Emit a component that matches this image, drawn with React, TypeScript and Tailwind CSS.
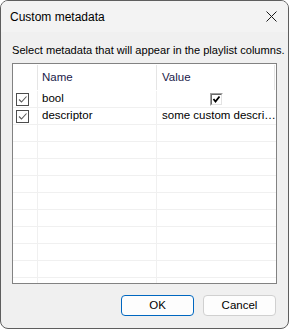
import React from 'react';

const font = { fontFamily: '"Segoe UI", "Liberation Sans", Arial, sans-serif' };

const rows = [
  { name: 'bool', value: 'check' },
  { name: 'descriptor', value: 'some custom descri…' },
];

const ListCheck: React.FC = () => (
  <div className="w-[13px] h-[13px] border border-[#4d4d4d] bg-white flex items-center justify-center">
    <svg width="11" height="11" viewBox="0 0 11 11">
      <polyline points="2,5.5 4.5,8 9.5,2.5" fill="none" stroke="#5a5a5a" strokeWidth="1.1" />
    </svg>
  </div>
);

const ClassicCheck: React.FC = () => (
  <div className="w-[13px] h-[13px] border-t border-l border-[#a0a0a0] border-r border-b border-r-white border-b-white">
    <div className="w-full h-full border-t border-l border-[#696969] border-r border-b border-r-[#e3e3e3] border-b-[#e3e3e3] bg-white flex items-center justify-center">
      <svg width="9" height="9" viewBox="0 0 9 9">
        <polyline points="1.5,4 3.5,6.5 7.5,1.5" fill="none" stroke="#000" strokeWidth="1.8" />
      </svg>
    </div>
  </div>
);

export default function App() {
  const empty = Array.from({ length: 10 });
  return (
    <div
      className="w-[289px] h-[329px] rounded-[8px] border border-[#5e5e5e] overflow-hidden bg-[#f0f0f0] flex flex-col text-[11.5px] text-black"
      style={font}
    >
      {/* Title bar */}
      <div className="h-[31px] flex items-center justify-between pl-[9px] pr-[10px] bg-[#f3f3f3]">
        <span className="leading-none text-[12px]">Custom metadata</span>
        <svg width="11" height="11" viewBox="0 0 11 11" className="mr-[1px]">
          <path d="M0.5 0.5 L10.5 10.5 M10.5 0.5 L0.5 10.5" stroke="#1a1a1a" strokeWidth="1" />
        </svg>
      </div>

      {/* Body */}
      <div className="flex-1 flex flex-col px-[11px]">
        <p className="mt-[10px] h-[16px] leading-[16px] whitespace-nowrap text-[11.1px]">
          Select metadata that will appear in the playlist columns.
        </p>

        <div className="mt-[5px] h-[221px] border border-[#828282] bg-white overflow-hidden">
          {/* Header */}
          <div className="h-[27px] flex text-[#1a1a4a]">
            <div className="w-[25px] border-r border-[#e5e5e5] my-[1px]" />
            <div className="w-[119px] border-r border-[#e5e5e5] my-[1px] flex items-center pl-[4px]">Name</div>
            <div className="w-[118px] border-r border-[#e5e5e5] my-[1px] flex items-center pl-[5px]">Value</div>
          </div>

          {/* Rows */}
          {rows.map((r) => (
            <div key={r.name} className="h-[17px] flex border-b border-[#f0f0f0]">
              <div className="w-[25px] border-r border-[#f0f0f0] flex items-center pl-[3px]">
                <ListCheck />
              </div>
              <div className="w-[119px] border-r border-[#f0f0f0] flex items-center pl-[4px]">
                {r.name}
              </div>
              <div className="w-[119px] flex items-center justify-center pl-[5px] pr-[4px] min-w-0">
                {r.value === 'check' ? (
                  <div className="pr-[1px]"><ClassicCheck /></div>
                ) : (
                  <span className="w-full whitespace-nowrap">{r.value}</span>
                )}
              </div>
            </div>
          ))}
          {empty.map((_, i) => (
            <div key={i} className="h-[17px] flex border-b border-[#f0f0f0]">
              <div className="w-[25px] border-r border-[#f0f0f0]" />
              <div className="w-[119px] border-r border-[#f0f0f0]" />
              <div className="w-[119px]" />
            </div>
          ))}
        </div>

        {/* Buttons */}
        <div className="mt-[11px] flex justify-end gap-[9px] pr-[1px]">
          <button className="w-[73px] h-[21px] rounded-[4px] border border-[#0067c0] bg-[#fdfdfd] leading-none">
            OK
          </button>
          <button className="w-[73px] h-[21px] rounded-[4px] border border-[#d0d0d0] bg-[#fdfdfd] leading-none">
            Cancel
          </button>
        </div>
      </div>
    </div>
  );
}
